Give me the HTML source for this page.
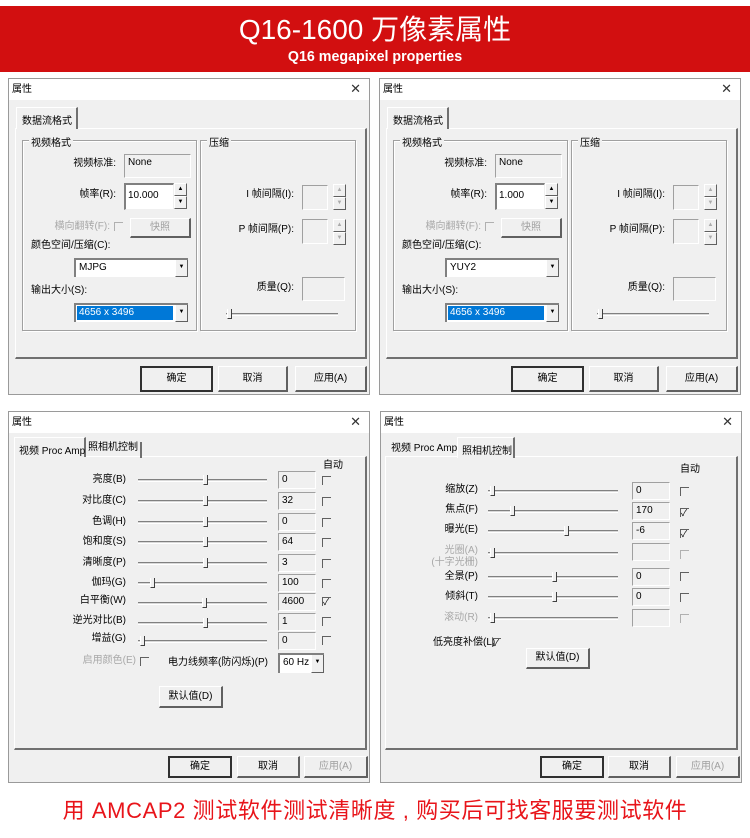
<!DOCTYPE html>
<html><head><meta charset="utf-8"><style>
*{margin:0;padding:0;box-sizing:border-box}
body{width:750px;height:838px;background:#fff;position:relative;overflow:hidden;font-family:"Liberation Sans","Noto Sans CJK SC",sans-serif;}
.a{position:absolute}
.t{position:absolute;font-size:10px;white-space:nowrap;color:#000;line-height:12px}
.lr{transform:translate(-100%,-50%)}
.lc{transform:translateY(-50%)}
.g{color:#a8a8a8}
.d{position:absolute;background:#f0f0f0;border:1px solid #9a9a9a}
.tb{position:absolute;left:0;top:0;right:0;height:21px;background:#fff}
.x{position:absolute;right:8px;top:2px;font-size:13px;color:#333}
.pn{position:absolute;border-top:1px solid #fff;border-left:1px solid #fff;border-right:2px solid #707070;border-bottom:2px solid #707070}
.tab{position:absolute;border-top:1px solid #fff;border-left:1px solid #fff;border-right:2px solid #707070;background:#f0f0f0;font-size:10px;padding:4px 0 0 5px;white-space:nowrap}
.grp{position:absolute;border:1px solid #a0a0a0;box-shadow:1px 1px 0 #fff, inset 1px 1px 0 #fff}
.gl{position:absolute;top:-7px;left:6px;background:#f0f0f0;font-size:10px;padding:0 2px}
.bx{position:absolute;background:#f0f0f0;border-top:1px solid #a0a0a0;border-left:1px solid #a0a0a0;border-right:1px solid #fff;border-bottom:1px solid #fff;font-size:10px;padding:2px 0 0 3px}
.in{position:absolute;background:#fff;border-top:2px solid #808080;border-left:2px solid #808080;border-right:1px solid #f0f0f0;border-bottom:1px solid #f0f0f0;font-size:10px;padding:2px 0 0 2px}
.bt{position:absolute;background:#f0f0f0;border-top:1px solid #fff;border-left:1px solid #fff;border-right:2px solid #606060;border-bottom:2px solid #606060;font-size:10px;text-align:center}
.df{border:2px solid #303030}
.sp{position:absolute;width:13px;background:#f0f0f0;border-top:1px solid #fff;border-left:1px solid #fff;border-right:1px solid #606060;border-bottom:1px solid #606060;font-size:6px;text-align:center;line-height:10px}
.cb{position:absolute;width:9px;height:9px;border-top:1px solid #606060;border-left:1px solid #606060;font-size:9px;line-height:8px}
.cb.g{border-color:#b0b0b0}
.sl{position:absolute;height:3px;border-top:1px solid #808080;border-bottom:1px solid #fff;background:#d8d8d8}
.th{position:absolute;width:5px;height:10px;border-right:1px solid #404040;border-bottom:1px solid #404040;border-left:1px solid #fff;top:-5px;background:#f0f0f0}
.cm{position:absolute;background:#fff;border-top:2px solid #808080;border-left:2px solid #808080;font-size:10px;padding:2px 0 0 3px}
.ar{position:absolute;right:0;top:0;bottom:0;width:13px;background:#f0f0f0;border-left:1px solid #fff;border-right:1px solid #606060;border-bottom:1px solid #606060;font-size:6px;text-align:center;padding-top:4px;color:#000}
</style></head><body>

<div class="a" style="left:0;top:6px;width:750px;height:66px;background:#d20f10"></div>
<div class="a" style="left:0;top:13px;width:750px;text-align:center;color:#fff;font-size:28px;line-height:34px;font-family:'Liberation Sans','Noto Sans CJK SC',sans-serif;">Q16-1600 万像素属性</div>
<div class="a" style="left:0;top:48px;width:750px;text-align:center;color:#fff;font-size:15px;line-height:17px;font-weight:bold;font-family:'Liberation Sans Narrow','Liberation Sans',sans-serif;transform:scaleX(0.95)">Q16 megapixel properties</div>

<!-- TOP LEFT -->
<div class="d" style="left:8px;top:78px;width:362px;height:317px">
 <div class="tb"></div><div class="t" style="left:3px;top:5px">属性</div><div class="x">✕</div>
 <div class="pn" style="left:6px;top:49px;width:352px;height:231px"></div>
 <div class="tab" style="left:7px;top:28px;width:62px;height:22px">数据流格式</div>
 <div class="grp" style="left:13px;top:61px;width:175px;height:191px"><div class="gl">视频格式</div></div>
 <div class="grp" style="left:191px;top:61px;width:156px;height:191px"><div class="gl">压缩</div></div>
 <div class="t lr" style="left:107px;top:85px">视频标准:</div>
 <div class="bx" style="left:115px;top:75px;width:67px;height:24px">None</div>
 <div class="t lr" style="left:107px;top:116px">帧率(R):</div>
 <div class="in" style="left:115px;top:104px;width:50px;height:27px;padding-top:5px">10.000</div>
 <div class="sp" style="left:165px;top:104px;height:13px">▲</div><div class="sp" style="left:165px;top:117px;height:13px">▼</div>
 <div class="t lr g" style="left:101px;top:148px">横向翻转(F):</div>
 <div class="cb g" style="left:105px;top:143px"></div>
 <div class="bt g" style="left:121px;top:139px;width:61px;height:20px;line-height:17px;color:#a0a0a0">快照</div>
 <div class="t lc" style="left:22px;top:167px">颜色空间/压缩(C):</div>
 <div class="cm" style="left:65px;top:179px;width:114px;height:19px">MJPG<div class="ar">▼</div></div>
 <div class="t lc" style="left:22px;top:212px">输出大小(S):</div>
 <div class="cm" style="left:65px;top:224px;width:114px;height:19px;padding:1px"><div style="background:#0078d7;color:#fff;height:14px;width:96px;padding-left:2px;line-height:14px">4656 x 3496</div><div class="ar">▼</div></div>
 <div class="t lr" style="left:285px;top:116px">I 帧间隔(I):</div>
 <div class="bx" style="left:293px;top:106px;width:26px;height:25px"></div>
 <div class="sp" style="left:324px;top:105px;height:13px;color:#aaa">▲</div><div class="sp" style="left:324px;top:118px;height:13px;color:#aaa">▼</div>
 <div class="t lr" style="left:285px;top:151px">P 帧间隔(P):</div>
 <div class="bx" style="left:293px;top:140px;width:26px;height:25px"></div>
 <div class="sp" style="left:324px;top:140px;height:13px;color:#aaa">▲</div><div class="sp" style="left:324px;top:153px;height:13px;color:#aaa">▼</div>
 <div class="t lr" style="left:285px;top:209px">质量(Q):</div>
 <div class="bx" style="left:293px;top:198px;width:43px;height:24px"></div>
 <div class="sl" style="left:217px;top:234px;width:112px"><div class="th" style="left:1px"></div></div>
 <div class="bt df" style="left:131px;top:287px;width:73px;height:26px;line-height:22px">确定</div>
 <div class="bt" style="left:209px;top:287px;width:70px;height:26px;line-height:23px">取消</div>
 <div class="bt" style="left:286px;top:287px;width:72px;height:26px;line-height:23px">应用(A)</div>
</div>

<!-- TOP RIGHT -->
<div class="d" style="left:379px;top:78px;width:362px;height:317px">
 <div class="tb"></div><div class="t" style="left:3px;top:5px">属性</div><div class="x">✕</div>
 <div class="pn" style="left:6px;top:49px;width:352px;height:231px"></div>
 <div class="tab" style="left:7px;top:28px;width:62px;height:22px">数据流格式</div>
 <div class="grp" style="left:13px;top:61px;width:175px;height:191px"><div class="gl">视频格式</div></div>
 <div class="grp" style="left:191px;top:61px;width:156px;height:191px"><div class="gl">压缩</div></div>
 <div class="t lr" style="left:107px;top:85px">视频标准:</div>
 <div class="bx" style="left:115px;top:75px;width:67px;height:24px">None</div>
 <div class="t lr" style="left:107px;top:116px">帧率(R):</div>
 <div class="in" style="left:115px;top:104px;width:50px;height:27px;padding-top:5px">1.000</div>
 <div class="sp" style="left:165px;top:104px;height:13px">▲</div><div class="sp" style="left:165px;top:117px;height:13px">▼</div>
 <div class="t lr g" style="left:101px;top:148px">横向翻转(F):</div>
 <div class="cb g" style="left:105px;top:143px"></div>
 <div class="bt g" style="left:121px;top:139px;width:61px;height:20px;line-height:17px;color:#a0a0a0">快照</div>
 <div class="t lc" style="left:22px;top:167px">颜色空间/压缩(C):</div>
 <div class="cm" style="left:65px;top:179px;width:114px;height:19px">YUY2<div class="ar">▼</div></div>
 <div class="t lc" style="left:22px;top:212px">输出大小(S):</div>
 <div class="cm" style="left:65px;top:224px;width:114px;height:19px;padding:1px"><div style="background:#0078d7;color:#fff;height:14px;width:96px;padding-left:2px;line-height:14px">4656 x 3496</div><div class="ar">▼</div></div>
 <div class="t lr" style="left:285px;top:116px">I 帧间隔(I):</div>
 <div class="bx" style="left:293px;top:106px;width:26px;height:25px"></div>
 <div class="sp" style="left:324px;top:105px;height:13px;color:#aaa">▲</div><div class="sp" style="left:324px;top:118px;height:13px;color:#aaa">▼</div>
 <div class="t lr" style="left:285px;top:151px">P 帧间隔(P):</div>
 <div class="bx" style="left:293px;top:140px;width:26px;height:25px"></div>
 <div class="sp" style="left:324px;top:140px;height:13px;color:#aaa">▲</div><div class="sp" style="left:324px;top:153px;height:13px;color:#aaa">▼</div>
 <div class="t lr" style="left:285px;top:209px">质量(Q):</div>
 <div class="bx" style="left:293px;top:198px;width:43px;height:24px"></div>
 <div class="sl" style="left:217px;top:234px;width:112px"><div class="th" style="left:1px"></div></div>
 <div class="bt df" style="left:131px;top:287px;width:73px;height:26px;line-height:22px">确定</div>
 <div class="bt" style="left:209px;top:287px;width:70px;height:26px;line-height:23px">取消</div>
 <div class="bt" style="left:286px;top:287px;width:72px;height:26px;line-height:23px">应用(A)</div>
</div>

<!-- BOTTOM LEFT -->
<div class="d" style="left:8px;top:411px;width:362px;height:372px">
 <div class="tb"></div><div class="t" style="left:3px;top:5px">属性</div><div class="x">✕</div>
 <div class="pn" style="left:5px;top:44px;width:353px;height:294px"></div>
 <div class="tab" style="left:5px;top:25px;width:72px;height:20px;padding-left:4px">视频 Proc Amp</div>
 <div class="t" style="left:79px;top:30px;border-right:2px solid #707070;padding-right:2px;height:16px">照相机控制</div>
 <div class="t" style="left:314px;top:48px">自动</div>

 <div class="t lr" style="left:117px;top:68px">亮度(B)</div><div class="sl" style="left:129px;top:67px;width:129px"><div class="th" style="left:65px"></div></div><div class="bx" style="left:269px;top:59px;width:38px;height:18px">0</div><div class="cb" style="left:313px;top:64px"></div>
 <div class="t lr" style="left:117px;top:89px">对比度(C)</div><div class="sl" style="left:129px;top:88px;width:129px"><div class="th" style="left:65px"></div></div><div class="bx" style="left:269px;top:80px;width:38px;height:18px">32</div><div class="cb" style="left:313px;top:85px"></div>
 <div class="t lr" style="left:117px;top:110px">色调(H)</div><div class="sl" style="left:129px;top:109px;width:129px"><div class="th" style="left:65px"></div></div><div class="bx" style="left:269px;top:101px;width:38px;height:18px">0</div><div class="cb" style="left:313px;top:106px"></div>
 <div class="t lr" style="left:117px;top:130px">饱和度(S)</div><div class="sl" style="left:129px;top:129px;width:129px"><div class="th" style="left:65px"></div></div><div class="bx" style="left:269px;top:121px;width:38px;height:18px">64</div><div class="cb" style="left:313px;top:126px"></div>
 <div class="t lr" style="left:117px;top:151px">清晰度(P)</div><div class="sl" style="left:129px;top:150px;width:129px"><div class="th" style="left:65px"></div></div><div class="bx" style="left:269px;top:142px;width:38px;height:18px">3</div><div class="cb" style="left:313px;top:147px"></div>
 <div class="t lr" style="left:117px;top:171px">伽玛(G)</div><div class="sl" style="left:129px;top:170px;width:129px"><div class="th" style="left:12px"></div></div><div class="bx" style="left:269px;top:162px;width:38px;height:18px">100</div><div class="cb" style="left:313px;top:167px"></div>
 <div class="t lr" style="left:117px;top:189px">白平衡(W)</div><div class="sl" style="left:129px;top:190px;width:129px"><div class="th" style="left:64px"></div></div><div class="bx" style="left:269px;top:181px;width:38px;height:18px">4600</div><div class="cb" style="left:313px;top:185px">✓</div>
 <div class="t lr" style="left:117px;top:209px">逆光对比(B)</div><div class="sl" style="left:129px;top:210px;width:129px"><div class="th" style="left:65px"></div></div><div class="bx" style="left:269px;top:201px;width:38px;height:18px">1</div><div class="cb" style="left:313px;top:205px"></div>
 <div class="t lr" style="left:117px;top:227px">增益(G)</div><div class="sl" style="left:129px;top:228px;width:129px"><div class="th" style="left:2px"></div></div><div class="bx" style="left:269px;top:220px;width:38px;height:18px">0</div><div class="cb" style="left:313px;top:224px"></div>

 <div class="t lr g" style="left:127px;top:249px">启用颜色(E)</div><div class="cb" style="left:131px;top:245px"></div>
 <div class="t lr" style="left:259px;top:251px">电力线频率(防闪烁)(P)</div>
 <div class="cm" style="left:269px;top:241px;width:46px;height:20px;background:#fff">60 Hz<div class="ar">▼</div></div>
 <div class="bt" style="left:150px;top:274px;width:64px;height:22px;line-height:19px">默认值(D)</div>
 <div class="bt df" style="left:159px;top:344px;width:64px;height:22px;line-height:18px">确定</div>
 <div class="bt" style="left:228px;top:344px;width:63px;height:22px;line-height:19px">取消</div>
 <div class="bt g" style="left:295px;top:344px;width:64px;height:22px;line-height:19px;color:#a0a0a0">应用(A)</div>
</div>

<!-- BOTTOM RIGHT -->
<div class="d" style="left:380px;top:411px;width:362px;height:372px">
 <div class="tb"></div><div class="t" style="left:3px;top:5px">属性</div><div class="x">✕</div>
 <div class="pn" style="left:4px;top:44px;width:353px;height:294px"></div>
 <div class="t" style="left:10px;top:31px">视频 Proc Amp</div>
 <div class="tab" style="left:76px;top:25px;width:58px;height:21px;padding-left:4px">照相机控制</div>
 <div class="t" style="left:299px;top:52px">自动</div>

 <div class="t lr" style="left:97px;top:78px">缩放(Z)</div><div class="sl" style="left:107px;top:78px;width:130px"><div class="th" style="left:2px"></div></div><div class="bx" style="left:251px;top:70px;width:38px;height:18px">0</div><div class="cb" style="left:299px;top:75px"></div>
 <div class="t lr" style="left:97px;top:98px">焦点(F)</div><div class="sl" style="left:107px;top:98px;width:130px"><div class="th" style="left:22px"></div></div><div class="bx" style="left:251px;top:90px;width:38px;height:18px">170</div><div class="cb" style="left:299px;top:96px">✓</div>
 <div class="t lr" style="left:97px;top:118px">曝光(E)</div><div class="sl" style="left:107px;top:118px;width:130px"><div class="th" style="left:76px"></div></div><div class="bx" style="left:251px;top:110px;width:38px;height:18px">-6</div><div class="cb" style="left:299px;top:117px">✓</div>
 <div class="t g" style="left:97px;top:133px;transform:translateX(-100%);text-align:right">光圈(A)<br>(十字光栅)</div><div class="sl" style="left:107px;top:140px;width:130px"><div class="th" style="left:2px"></div></div><div class="bx" style="left:251px;top:131px;width:38px;height:18px"></div><div class="cb g" style="left:299px;top:138px"></div>
 <div class="t lr" style="left:97px;top:165px">全景(P)</div><div class="sl" style="left:107px;top:164px;width:130px"><div class="th" style="left:64px"></div></div><div class="bx" style="left:251px;top:156px;width:38px;height:18px">0</div><div class="cb" style="left:299px;top:160px"></div>
 <div class="t lr" style="left:97px;top:185px">倾斜(T)</div><div class="sl" style="left:107px;top:184px;width:130px"><div class="th" style="left:64px"></div></div><div class="bx" style="left:251px;top:176px;width:38px;height:18px">0</div><div class="cb" style="left:299px;top:181px"></div>
 <div class="t lr g" style="left:97px;top:206px">滚动(R)</div><div class="sl" style="left:107px;top:205px;width:130px"><div class="th" style="left:2px"></div></div><div class="bx" style="left:251px;top:197px;width:38px;height:18px"></div><div class="cb g" style="left:299px;top:202px"></div>

 <div class="t lc" style="left:52px;top:231px">低亮度补偿(L)</div><div class="cb" style="left:111px;top:226px">✓</div>
 <div class="bt" style="left:145px;top:236px;width:64px;height:21px;line-height:18px">默认值(D)</div>
 <div class="bt df" style="left:159px;top:344px;width:64px;height:22px;line-height:18px">确定</div>
 <div class="bt" style="left:227px;top:344px;width:63px;height:22px;line-height:19px">取消</div>
 <div class="bt g" style="left:295px;top:344px;width:64px;height:22px;line-height:19px;color:#a0a0a0">应用(A)</div>
</div>

<div class="a" style="left:0;top:797px;width:750px;text-align:center;color:#e8141a;font-size:22px;letter-spacing:0.6px;line-height:28px;font-family:'Liberation Sans','Noto Sans CJK SC',sans-serif">用 AMCAP2 测试软件测试清晰度 , 购买后可找客服要测试软件</div>
</body></html>
